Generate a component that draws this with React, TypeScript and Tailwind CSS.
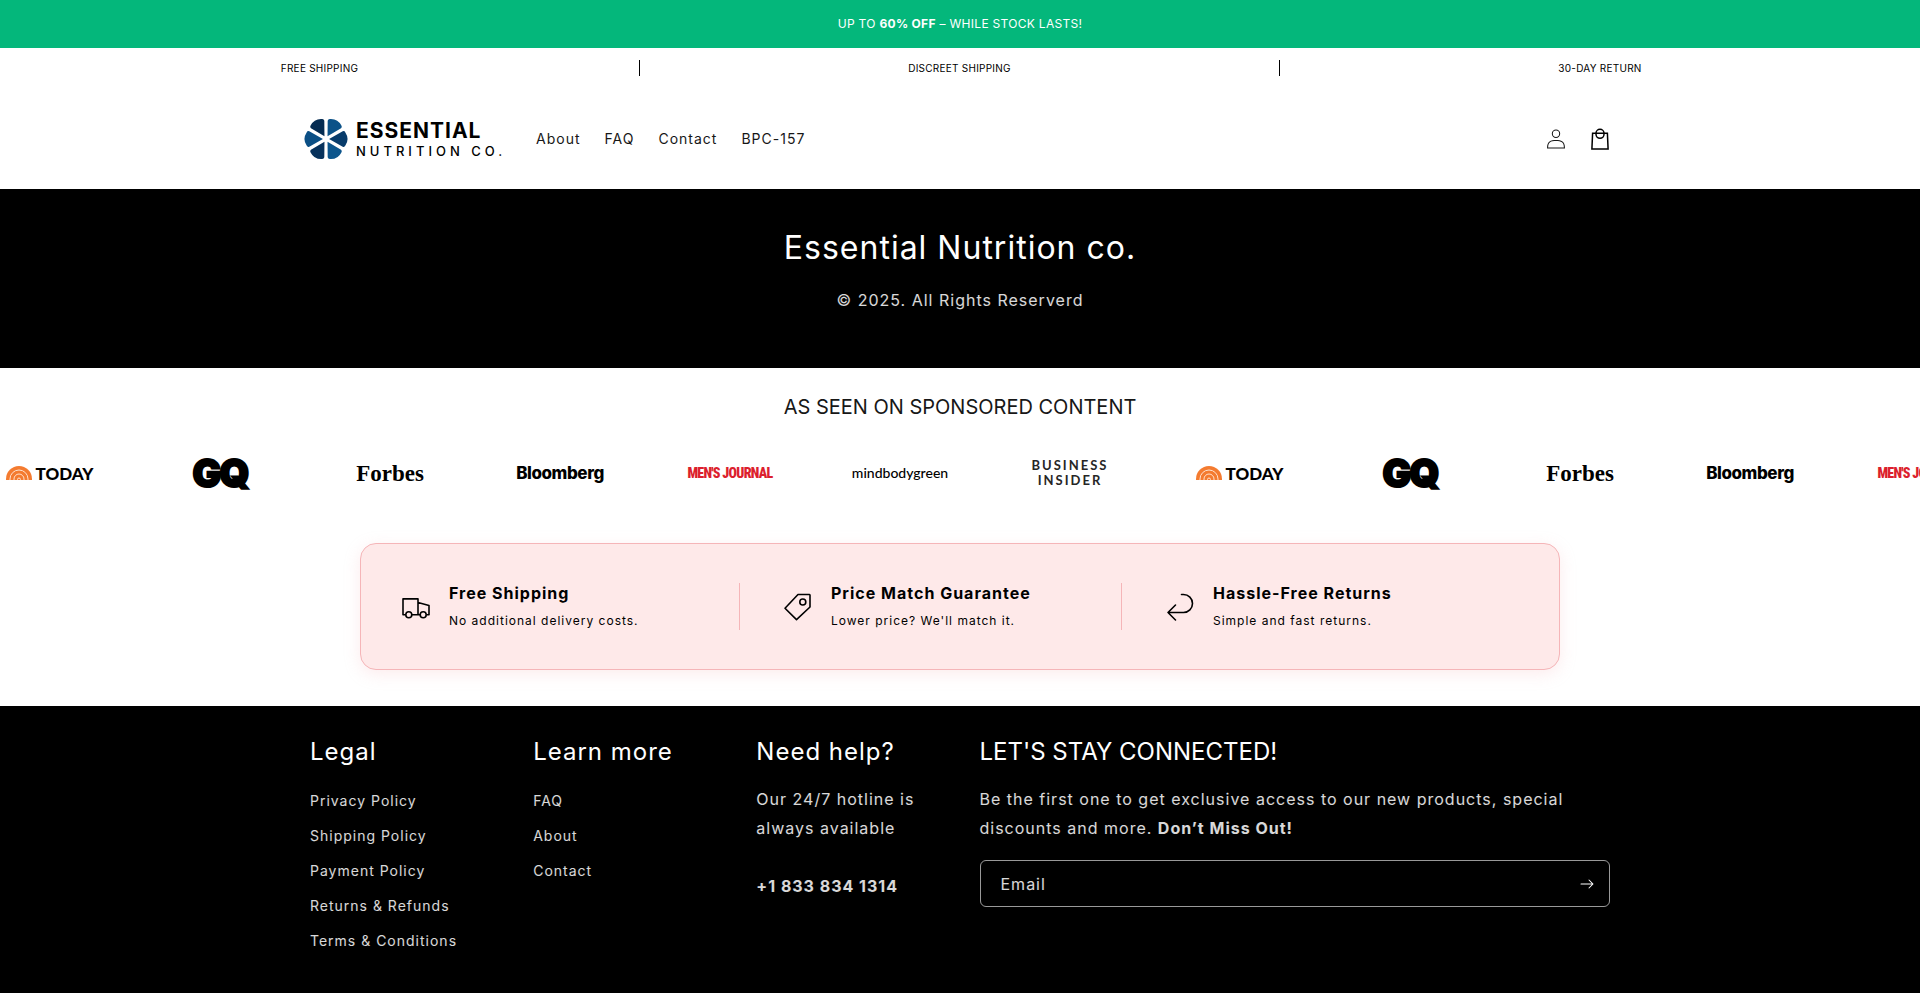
import React from 'react';

const navLinks = ['About', 'FAQ', 'Contact', 'BPC-157'];
const usps = ['Free shipping', 'Discreet shipping', '30-day return'];
const legalLinks = ['Privacy Policy', 'Shipping Policy', 'Payment Policy', 'Returns & Refunds', 'Terms & Conditions'];
const learnLinks = ['FAQ', 'About', 'Contact'];

const wedges = [
  { angle: 0, fill: '#083c6b' },
  { angle: 60, fill: '#0c558c' },
  { angle: 120, fill: '#07325c' },
  { angle: 180, fill: '#0b4f85' },
  { angle: 240, fill: '#052c52' },
  { angle: 300, fill: '#0c5288' },
];

const PinwheelMark = () => (
  <svg viewBox="-50 -50 100 100" className="size-11" aria-hidden="true">
    {wedges.map(w => (
      <path key={w.angle} d="M7 0 L38 -17.500 Q42 -19 44 -15 Q54 0 44 15 Q42 19 38 17.500 Z" transform={`rotate(${w.angle})`} fill={w.fill} />
    ))}
  </svg>
);

const Logo = () => (
  <a href="#" className="flex items-center gap-2 text-black">
    <PinwheelMark />
    <span className="flex flex-col">
      <span className="text-[21px] leading-6 font-bold">ESSENTIAL</span>
      <span className="text-[13px] leading-4 font-medium tracking-[4px]">NUTRITION CO.</span>
    </span>
  </a>
);

const AccountIcon = () => (
  <svg viewBox="0 0 18 19" className="h-5 w-5" fill="none" aria-hidden="true">
    <path
      fillRule="evenodd"
      clipRule="evenodd"
      fill="currentColor"
      d="M6 4.5a3 3 0 1 1 6 0 3 3 0 0 1-6 0zm3-4a4 4 0 1 0 0 8 4 4 0 0 0 0-8zm5.58 12.15c1.12.82 1.83 2.24 1.91 4.85H1.51c.08-2.6.79-4.03 1.9-4.85C4.66 11.75 6.5 11.5 9 11.5s4.35.26 5.58 1.15zM9 10.5c-2.5 0-4.65.24-6.17 1.35C1.27 12.98.5 14.93.5 18v.5h17V18c0-3.07-.77-5.02-2.33-6.15-1.52-1.1-3.67-1.35-6.17-1.35z"
    />
  </svg>
);

const BagIcon = () => (
  <svg viewBox="0 0 18 22" className="h-[22px] w-[18px]" fill="none" stroke="currentColor" strokeWidth="1.5" aria-hidden="true">
    <path d="M1.6 5.3h14.8l.7 15.6H.9z" />
    <path d="M5 5.3a4 4 0 0 1 8 0v1a4 4 0 0 1-8 0z" />
  </svg>
);

const TruckIcon = () => (
  <svg viewBox="0 0 32 32" className="size-8" fill="none" stroke="currentColor" strokeWidth="1.6" strokeLinejoin="round" aria-hidden="true">
    <path d="M5.500 23.800H3V7.900h15v15.900H12M18 11.600l11 2.900v9.300h-2.500M18 23.800h2" />
    <circle cx="8.8" cy="23.8" r="3" />
    <circle cx="23.2" cy="23.8" r="3" />
  </svg>
);

const TagIcon = () => (
  <svg viewBox="0 0 32 32" className="size-8" fill="none" stroke="currentColor" strokeWidth="1.6" strokeLinejoin="round" aria-hidden="true">
    <path d="M16 3.500h11.500l.5.5V16L14.500 28.600 3 17.300z" />
    <circle cx="20.8" cy="11" r="3" />
  </svg>
);

const ReturnIcon = () => (
  <svg viewBox="0 0 32 32" className="size-8" fill="none" stroke="currentColor" strokeWidth="1.6" strokeLinecap="round" strokeLinejoin="round" aria-hidden="true">
    <path d="M17.500 3.500h2a9 9 0 0 1 0 18H4M11.500 14 4 21.500l7.500 7.500" />
  </svg>
);

const ArrowIcon = () => (
  <svg viewBox="0 0 14 10" className="h-[10px] w-[14px]" fill="none" aria-hidden="true">
    <path
      fillRule="evenodd"
      clipRule="evenodd"
      fill="currentColor"
      d="M8.537.808a.5.5 0 0 1 .817-.162l4 4a.5.5 0 0 1 0 .708l-4 4a.5.5 0 1 1-.708-.708L11.793 5.5H1a.5.5 0 0 1 0-1h10.793L8.646 1.354a.5.5 0 0 1-.109-.546z"
    />
  </svg>
);

const TodayLogo = () => (
  <span className="flex items-center gap-[3px]">
    <svg viewBox="0 0 26 14" className="h-[14px] w-[26px]" fill="none" aria-hidden="true">
      <path d="M0 14v-1a13 13 0 0 1 26 0v1z" fill="#f47b30" />
      <g stroke="#ffe3cf" strokeWidth="1">
        <path d="M4 14v-1a9 9 0 0 1 18 0v1" />
        <path d="M8 14v-1a5 5 0 0 1 10 0v1" />
        <path d="M11.500 14v-.5a1.500 1.500 0 0 1 3 0v.5" />
      </g>
    </svg>
    <span className="font-[Lato,sans-serif] text-[17px] font-black">TODAY</span>
  </span>
);

const pressLogos: React.ReactNode[] = [
  <TodayLogo />,
  <span className="text-[38px] font-black tracking-tighter [-webkit-text-stroke:2px_black]">GQ</span>,
  <span className="font-['Liberation_Serif',serif] text-[23px] font-bold">Forbes</span>,
  <span className="text-[17px] font-extrabold tracking-tight">Bloomberg</span>,
  <span className="font-['Roboto_Condensed',Roboto,sans-serif] text-sm font-black tracking-tighter text-[#dc1f2e]">MEN'S JOURNAL</span>,
  <span className="font-[Lato,sans-serif] text-sm font-medium">mindbodygreen</span>,
  <span className="text-center font-[Lato,sans-serif] text-[13px] leading-[15px] font-bold tracking-[2px] text-neutral-800">
    BUSINESS
    <br />
    INSIDER
  </span>,
];

const benefits = [
  { icon: <TruckIcon />, title: 'Free Shipping', text: 'No additional delivery costs.' },
  { icon: <TagIcon />, title: 'Price Match Guarantee', text: "Lower price? We'll match it." },
  { icon: <ReturnIcon />, title: 'Hassle-Free Returns', text: 'Simple and fast returns.' },
];

const FooterLinks: React.FC<{ title: string; links: string[] }> = ({ title, links }) => (
  <div>
    <h2 className="text-2xl leading-8">{title}</h2>
    <ul className="mt-[15px]">
      {links.map(link => (
        <li key={link}>
          <a href="#" className="block text-sm leading-[35px] text-white/85 hover:underline">{link}</a>
        </li>
      ))}
    </ul>
  </div>
);

const App: React.FC = () => {
  return (
    <div className="flex min-h-screen flex-col overflow-x-hidden bg-white font-[Inter,sans-serif] tracking-[1px] text-neutral-900">
      <div className="flex h-12 items-center justify-center bg-[#04b77b] text-xs tracking-wide text-white">
        <p>UP TO <strong>60% OFF</strong> – WHILE STOCK LASTS!</p>
      </div>

      <ul className="grid grid-cols-3 py-3 text-[10px] leading-4 tracking-wide text-black uppercase">
        {usps.map((usp, i) => (
          <li key={usp} className={`text-center ${i < usps.length - 1 ? 'border-r border-black' : ''}`}>{usp}</li>
        ))}
      </ul>

      <header className="px-[50px] pt-[29px] pb-7">
        <div className="mx-auto flex max-w-[1324px] items-center pl-[6px]">
          <Logo />
          <nav className="ml-[30px] flex gap-6 text-sm">
            {navLinks.map(link => (
              <a key={link} href="#" className="hover:underline">{link}</a>
            ))}
          </nav>
          <div className="ml-auto flex">
            <a href="#" aria-label="Log in" className="flex size-11 items-center justify-center"><AccountIcon /></a>
            <a href="#" aria-label="Cart" className="flex size-11 items-center justify-center text-black"><BagIcon /></a>
          </div>
        </div>
      </header>

      {/* Brand banner */}
      <section className="bg-black pt-9 pb-[53px] text-center text-white">
        <h1 className="text-[32px] leading-[46px]">Essential Nutrition co.</h1>
        <p className="mt-[15px] text-base leading-[29px] text-white/85">© 2025. All Rights Reserverd</p>
      </section>

      {/* Press logos */}
      <section className="pt-[23px]">
        <h2 className="text-center text-xl leading-8 tracking-normal">AS SEEN ON SPONSORED CONTENT</h2>
        <div className="mt-5 overflow-hidden">
          <ul className="-ml-[35px] flex h-[60px] w-max tracking-normal text-black">
            {[...pressLogos, ...pressLogos.slice(0, 5)].map((logo, i) => (
              <li key={i} className="flex w-[170px] shrink-0 items-center justify-center leading-none">{logo}</li>
            ))}
          </ul>
        </div>
      </section>

      {/* Benefits */}
      <section className="px-5 pt-10 pb-9">
        <div className="mx-auto grid max-w-[1200px] grid-cols-3 rounded-[16px] border border-[#f5b5b8] bg-[#fee9e9] py-[39px] pr-[13px] pl-[39px] text-black shadow-[0_4px_16px_rgba(248,180,184,0.25)]">
          {benefits.map((b, i) => (
            <div key={b.title} className={`mr-[42px] flex items-center gap-[17px] ${i < benefits.length - 1 ? 'border-r border-[#f5b5b8]' : ''}`}>
              {b.icon}
              <div>
                <h3 className="text-base leading-5 font-bold">{b.title}</h3>
                <p className="mt-2 text-xs leading-[19px]">{b.text}</p>
              </div>
            </div>
          ))}
        </div>
      </section>

      <footer className="flex-1 bg-black px-[50px] pt-[30px] pb-8 text-white">
        <div className="mx-auto grid max-w-[1300px] grid-cols-[1fr_1fr_1fr_3fr] gap-[13px]">
          <FooterLinks title="Legal" links={legalLinks} />
          <FooterLinks title="Learn more" links={learnLinks} />
          <div>
            <h2 className="text-2xl leading-8">Need help?</h2>
            <p className="mt-[17px] leading-[29px] text-white/85">
              Our 24/7 hotline is
              <br />
              always available
            </p>
            <p className="mt-[29px] leading-[29px] font-bold text-white/85">+1 833 834 1314</p>
          </div>
          <div>
            <h2 className="text-2xl leading-8 tracking-normal">LET'S STAY CONNECTED!</h2>
            <p className="mt-[17px] leading-[29px] text-white/85">
              Be the first one to get exclusive access to our new products, special
              <br />
              discounts and more. <strong>Don’t Miss Out!</strong>
            </p>
            <form className="mt-[17px] flex h-[47px] items-center rounded-md border border-white/60" onSubmit={e => e.preventDefault()}>
              <label htmlFor="newsletter-email" className="sr-only">Email</label>
              <input
                id="newsletter-email"
                type="email"
                placeholder="Email"
                className="h-full min-w-0 flex-1 bg-transparent px-5 tracking-[1px] outline-none placeholder:text-white/85"
              />
              <button type="submit" aria-label="Subscribe" className="flex size-11 items-center justify-center text-white">
                <ArrowIcon />
              </button>
            </form>
          </div>
        </div>
      </footer>
    </div>
  );
};

export default App;
